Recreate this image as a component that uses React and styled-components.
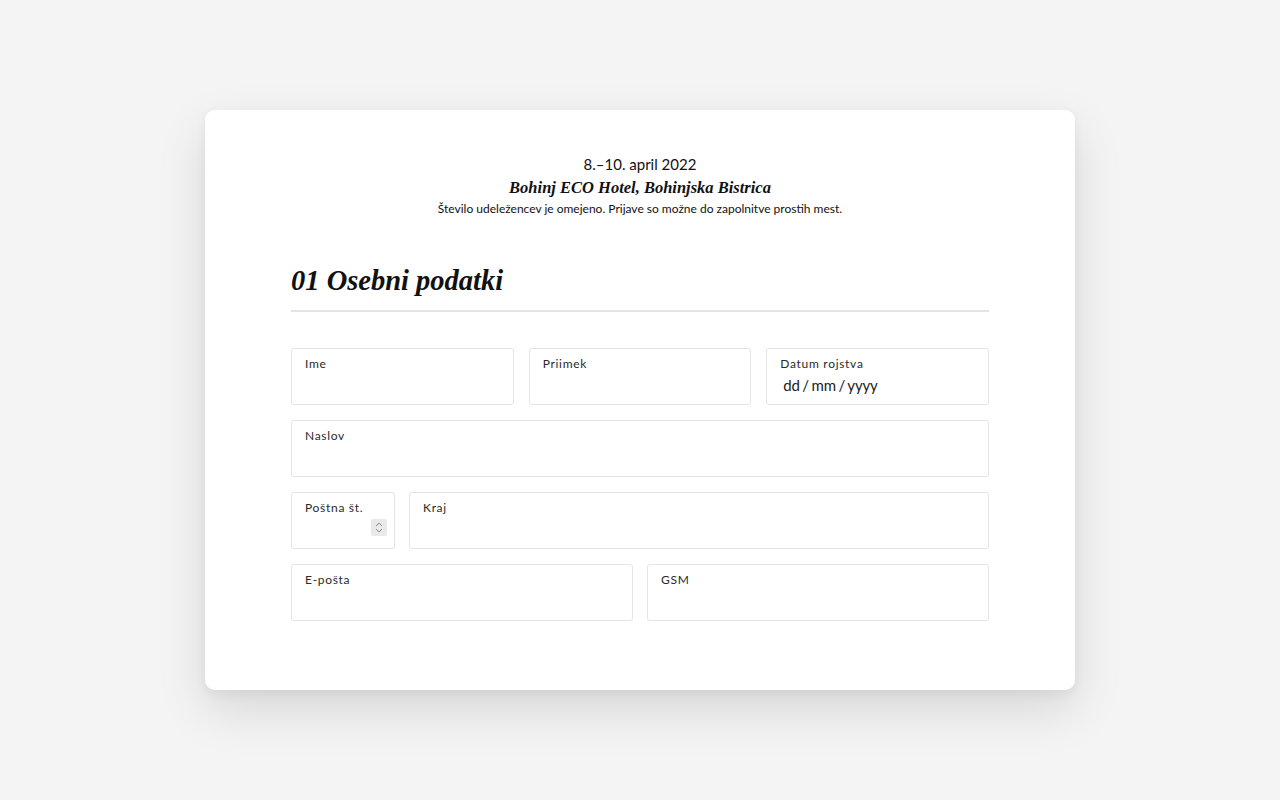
import React from "react";
import styled, { createGlobalStyle } from "styled-components";

const GlobalStyle = createGlobalStyle`
  html, body {
    margin: 0;
    padding: 0;
    background: #f4f4f4;
  }
  body {
    font-family: Lato, "Liberation Sans", sans-serif;
    color: #111;
  }
  * {
    box-sizing: border-box;
  }
`;

const Page = styled.div`
  min-height: 800px;
  padding-top: 110px;
  display: flex;
  justify-content: center;
`;

const Card = styled.div`
  width: 870px;
  height: 580px;
  background: #fff;
  border-radius: 10px;
  box-shadow: 0 20px 50px rgba(0, 0, 0, 0.12), 0 4px 12px rgba(0, 0, 0, 0.05);
  padding: 43px 86px 70px;
`;

const Intro = styled.header`
  display: flex;
  flex-direction: column;
  align-items: center;
  text-align: center;
`;

const Dates = styled.div`
  font-size: 15px;
  line-height: 22px;
  color: #111;
`;

const Venue = styled.div`
  font-family: "Liberation Serif", serif;
  font-style: italic;
  font-weight: 700;
  font-size: 16.5px;
  line-height: 26px;
`;

const Note = styled.div`
  font-size: 12px;
  line-height: 16px;
`;

const SectionTitle = styled.h2`
  margin: 44px 0 0;
  padding-bottom: 9px;
  border-bottom: 2px solid #e3e3e3;
  font-family: "Liberation Serif", serif;
  font-style: italic;
  font-weight: 700;
  font-size: 28.5px;
  line-height: 40px;
`;

const Fields = styled.div`
  margin-top: 36px;
  display: flex;
  flex-direction: column;
  gap: 15px;
`;

const Row = styled.div`
  display: grid;
  grid-template-columns: ${(p) => p.$cols};
  gap: ${(p) => p.$gap || 15}px;
`;

const Field = styled.label`
  position: relative;
  display: flex;
  flex-direction: column;
  height: 57px;
  padding: 7px 13px 0;
  border: 1px solid #e4e4e4;
  border-radius: 3px;
  background: #fff;
`;

const Label = styled.span`
  font-size: 12px;
  font-weight: 400;
  letter-spacing: 0.7px;
  line-height: 16px;
  color: #2a2a2a;
`;

const Input = styled.input`
  border: none;
  outline: none;
  padding: 0;
  margin-top: 2px;
  font: inherit;
  font-size: 15px;
  height: 22px;
  color: #222;
  background: transparent;
  width: 100%;
`;

const DateValue = styled.span`
  margin-top: 2px;
  padding-left: 3px;
  font-size: 15px;
  letter-spacing: -0.2px;
  word-spacing: -1px;
  line-height: 22px;
  color: #222;
`;

const Spinner = styled.span`
  position: absolute;
  right: 7px;
  top: 26px;
  width: 16px;
  height: 17px;
  background: #e9e9ea;
  border-radius: 2px;
  display: flex;
  align-items: center;
  justify-content: center;
`;

const TextField = ({ label }) => (
  <Field>
    <Label>{label}</Label>
    <Input type="text" />
  </Field>
);

export default function App() {
  return (
    <>
      <GlobalStyle />
      <Page>
        <Card>
          <Intro>
            <Dates>8.–10. april 2022</Dates>
            <Venue>Bohinj ECO Hotel, Bohinjska Bistrica</Venue>
            <Note>
              Število udeležencev je omejeno. Prijave so možne do zapolnitve
              prostih mest.
            </Note>
          </Intro>

          <SectionTitle>01 Osebni podatki</SectionTitle>

          <Fields>
            <Row $cols="1fr 1fr 1fr">
              <TextField label="Ime" />
              <TextField label="Priimek" />
              <Field>
                <Label>Datum rojstva</Label>
                <DateValue>dd / mm / yyyy</DateValue>
              </Field>
            </Row>
            <Row $cols="1fr">
              <TextField label="Naslov" />
            </Row>
            <Row $cols="104px 1fr" $gap={14}>
              <Field>
                <Label>Poštna št.</Label>
                <Input type="text" />
                <Spinner>
                  <svg width="10" height="13" viewBox="0 0 10 13" fill="none">
                    <path d="M2 5 L5 2 L8 5" stroke="#8a8a8a" strokeWidth="1" />
                    <path d="M2 8 L5 11 L8 8" stroke="#8a8a8a" strokeWidth="1" />
                  </svg>
                </Spinner>
              </Field>
              <TextField label="Kraj" />
            </Row>
            <Row $cols="1fr 1fr" $gap={14}>
              <TextField label="E-pošta" />
              <TextField label="GSM" />
            </Row>
          </Fields>
        </Card>
      </Page>
    </>
  );
}
